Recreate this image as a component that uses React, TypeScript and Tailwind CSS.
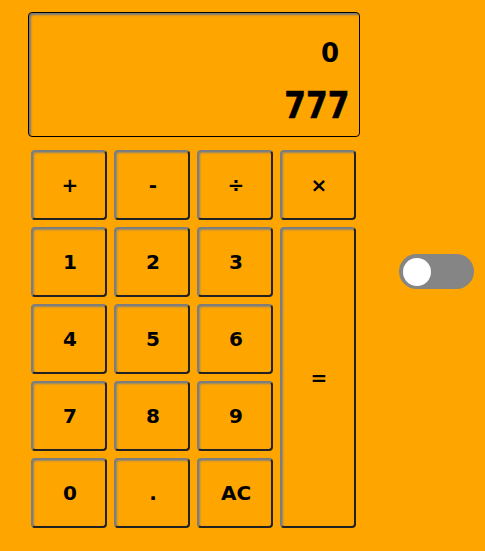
import React from "react";

const btn =
  "flex items-center justify-center rounded-[4px] border-2 border-t-[#7d7d7d] border-l-[#7d7d7d] border-r-[#222] border-b-[#222] bg-[#FFA500] text-[20px] font-bold text-black shadow-[inset_1px_1px_2px_#8f8570] pl-[2px]";

export default function App() {
  const keys: { label: string; cls?: string }[] = [
    { label: "+" },
    { label: "-" },
    { label: "÷" },
    { label: "×" },
    { label: "1" },
    { label: "2" },
    { label: "3" },
    { label: "=", cls: "row-span-4" },
    { label: "4" },
    { label: "5" },
    { label: "6" },
    { label: "7" },
    { label: "8" },
    { label: "9" },
    { label: "0" },
    { label: "." },
    { label: "AC" },
  ];
  return (
    <div
      className="w-[485px] h-[551px] bg-[#FFA500] flex items-start pl-[28px] pt-[12px]"
      style={{ fontFamily: '"DejaVu Sans", Verdana, sans-serif' }}
    >
      <div className="flex flex-col w-[332px]">
        <div className="h-[125px] rounded-[4px] border border-black shadow-[inset_2px_2px_2px_#7a7a7a] flex flex-col items-end">
          <div className="mt-[25px] mr-[20px] text-[26px] font-bold leading-[30px] text-black">0</div>
          <div className="mt-[17px] mr-[10px] text-[38px] font-bold leading-[40px] text-black origin-right scale-x-[0.82] [-webkit-text-stroke:0.6px_black]">
            777
          </div>
        </div>
        <div className="mt-[13px] ml-[3px] grid grid-cols-[repeat(4,76px)] grid-rows-[repeat(5,70px)] gap-[7px]">
          {keys.map((k) => (
            <div key={k.label} className={`${btn} ${k.cls ?? ""}`}>
              {k.label}
            </div>
          ))}
        </div>
      </div>
      <div className="ml-[39px] mt-[242px] w-[75px] h-[35px] rounded-full bg-[#858585] flex items-center px-[4px]">
        <div className="w-[28px] h-[28px] rounded-full bg-white" />
      </div>
    </div>
  );
}
